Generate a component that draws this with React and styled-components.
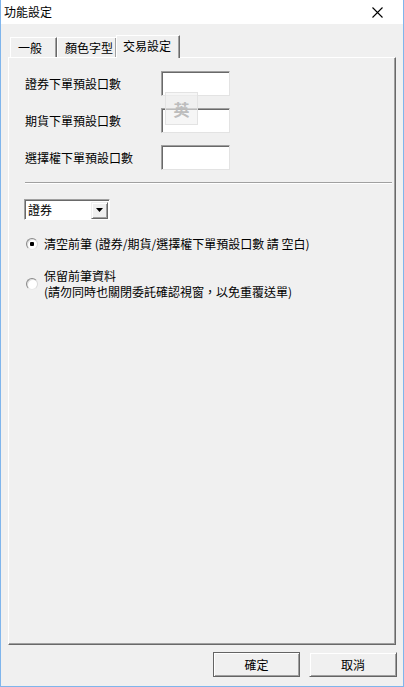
import React from "react";
import styled, { createGlobalStyle } from "styled-components";

const GlobalStyle = createGlobalStyle`
  html, body {
    margin: 0;
    padding: 0;
    background: #f0f0f0;
  }
  body {
    font-family: "Noto Sans CJK TC", "Liberation Sans", sans-serif;
    font-size: 12px;
    color: #000;
  }
`;

export default function App() {
  return (
    <>
      <GlobalStyle />
      <Window>
        {/* 標題列 */}
        <TitleBar>
          <Title>功能設定</Title>
          <CloseButton aria-label="close">
            <svg width="11" height="11" viewBox="0 0 11 11">
              <path d="M0.5 0.5 L10.5 10.5 M10.5 0.5 L0.5 10.5" stroke="#000" strokeWidth="1.1" />
            </svg>
          </CloseButton>
        </TitleBar>

        <Body>
          <TabRow>
            <Tab $width={47}>一般</Tab>
            <Tab $width={60}>顏色字型</Tab>
            <Tab $width={64} $active>交易設定</Tab>
          </TabRow>

          <Panel>
            <FieldRow>
              <Label>證券下單預設口數</Label>
              <TextBox />
            </FieldRow>
            <FieldRow>
              <Label>期貨下單預設口數</Label>
              <TextBox />
            </FieldRow>
            <FieldRow>
              <Label>選擇權下單預設口數</Label>
              <TextBox />
            </FieldRow>

            {/* 輸入法提示 */}
            <ImeHint>英</ImeHint>

            <Separator />

            <Select>
              <SelectText>證券</SelectText>
              <SelectArrow>
                <svg width="7" height="4" viewBox="0 0 7 4">
                  <path d="M0 0 H7 L3.5 4 Z" fill="#000" />
                </svg>
              </SelectArrow>
            </Select>

            <RadioRow>
              <Radio $checked />
              <RadioText>清空前筆 (證券/期貨/選擇權下單預設口數 請 空白)</RadioText>
            </RadioRow>
            <RadioRow>
              <Radio />
              <RadioText>
                保留前筆資料
                <br />
                (請勿同時也關閉委託確認視窗，以免重覆送單)
              </RadioText>
            </RadioRow>
          </Panel>

          <ButtonRow>
            <DialogButton $default>確定</DialogButton>
            <DialogButton>取消</DialogButton>
          </ButtonRow>
        </Body>
      </Window>
    </>
  );
}

/* ===== styled-components ===== */
const Window = styled.div`
  width: 404px;
  height: 687px;
  box-sizing: border-box;
  border: 1px solid #7fb5ec;
  border-top: none;
  background: #f0f0f0;
  display: flex;
  flex-direction: column;
`;

const TitleBar = styled.div`
  height: 24px;
  background: #fff;
  display: flex;
  align-items: center;
  justify-content: space-between;
  padding: 0 0 0 3px;
`;

const Title = styled.span`
  font-size: 12px;
  line-height: 16px;
`;

const CloseButton = styled.div`
  width: 36px;
  height: 24px;
  display: flex;
  align-items: center;
  justify-content: center;
  margin-right: 8px;
`;

const Body = styled.div`
  flex: 1;
  display: flex;
  flex-direction: column;
  padding: 11px 6px 0 7px;
`;

const TabRow = styled.div`
  display: flex;
  align-items: flex-end;
  height: 22px;
  padding-left: 2px;
  position: relative;
  z-index: 1;
`;

const Tab = styled.div`
  box-sizing: border-box;
  width: ${(p) => p.$width}px;
  height: ${(p) => (p.$active ? "23px" : "20px")};
  margin-bottom: ${(p) => (p.$active ? "-1px" : "0")};
  margin-left: ${(p) => (p.$active ? "-1px" : "0")};
  padding: 2px 0 0 ${(p) => (p.$active ? "6px" : "7px")};
  background: #f0f0f0;
  border-top: 1px solid #fff;
  border-left: 1px solid #fff;
  border-right: 1px solid #696969;
  box-shadow: inset -1px 0 #a0a0a0;
  line-height: 16px;
  font-size: 12px;
  white-space: nowrap;
`;

const Panel = styled.div`
  box-sizing: border-box;
  width: 388px;
  height: 588px;
  border-top: 1px solid #fff;
  border-left: 1px solid #fff;
  border-right: 1px solid #696969;
  border-bottom: 1px solid #696969;
  box-shadow: inset -1px -1px #a0a0a0;
  padding: 13px 0 0 16px;
  position: relative;
`;

const FieldRow = styled.div`
  display: flex;
  align-items: center;
  height: 25px;
  margin-bottom: 12px;
`;

const Label = styled.span`
  width: 136px;
  line-height: 16px;
`;

const TextBox = styled.div`
  box-sizing: border-box;
  width: 69px;
  height: 25px;
  background: #fff;
  border-top: 1px solid #a0a0a0;
  border-left: 1px solid #a0a0a0;
  border-right: 1px solid #e3e3e3;
  border-bottom: 1px solid #e3e3e3;
  box-shadow: inset 1px 1px #696969;
`;

const ImeHint = styled.div`
  position: absolute;
  left: 156px;
  top: 34px;
  width: 33px;
  height: 33px;
  box-sizing: border-box;
  border: 1px solid rgba(225, 225, 225, 0.9);
  background: rgba(240, 240, 240, 0.6);
  color: #bdbdbd;
  font-size: 16px;
  font-weight: 700;
  display: flex;
  align-items: center;
  justify-content: center;
`;

const Separator = styled.div`
  width: 367px;
  height: 0;
  border-top: 1px solid #a0a0a0;
  border-bottom: 1px solid #fff;
  margin: 1px 0 0 0;
`;

const Select = styled.div`
  box-sizing: border-box;
  width: 86px;
  height: 21px;
  margin-top: 15px;
  margin-left: -1px;
  background: #fff;
  border-top: 1px solid #a0a0a0;
  border-left: 1px solid #a0a0a0;
  border-right: 1px solid #fff;
  border-bottom: 1px solid #fff;
  box-shadow: inset 1px 1px #696969;
  display: flex;
  align-items: center;
  padding: 1px 1px 0 3px;
`;

const SelectText = styled.span`
  flex: 1;
  line-height: 16px;
`;

const SelectArrow = styled.div`
  box-sizing: border-box;
  width: 17px;
  height: 17px;
  background: #f0f0f0;
  border-top: 1px solid #f0f0f0;
  border-left: 1px solid #f0f0f0;
  border-right: 1px solid #696969;
  border-bottom: 1px solid #696969;
  box-shadow: inset 1px 1px #fff, inset -1px -1px #a0a0a0;
  display: flex;
  align-items: center;
  justify-content: center;
`;

const RadioRow = styled.div`
  display: flex;
  align-items: center;
  margin-top: 16px;
`;

const Radio = styled.span`
  box-sizing: border-box;
  width: 12px;
  height: 12px;
  border-radius: 50%;
  margin-left: 1px;
  margin-right: 6px;
  flex-shrink: 0;
  background: ${(p) =>
    p.$checked
      ? "radial-gradient(circle, #000 0 2px, #fff 2.5px)"
      : "#fff"};
  border: 1px solid;
  border-color: #8a8a8a #d8d8d8 #e8e8e8 #8a8a8a;
  box-shadow: inset 1px 1px #5a5a5a33;
`;

const RadioText = styled.span`
  line-height: 16px;
`;

const ButtonRow = styled.div`
  display: flex;
  justify-content: flex-end;
  gap: 9px;
  margin-top: 7px;
`;

const DialogButton = styled.div`
  box-sizing: border-box;
  width: ${(p) => (p.$default ? "87px" : "88px")};
  height: 25px;
  background: #f0f0f0;
  border: 1px solid ${(p) => (p.$default ? "#646464" : "#f0f0f0")};
  border-bottom-color: #646464;
  border-right-color: #646464;
  box-shadow: inset 1px 1px #fff, inset -1px -1px #a0a0a0;
  display: flex;
  align-items: center;
  justify-content: center;
  line-height: 16px;
`;
